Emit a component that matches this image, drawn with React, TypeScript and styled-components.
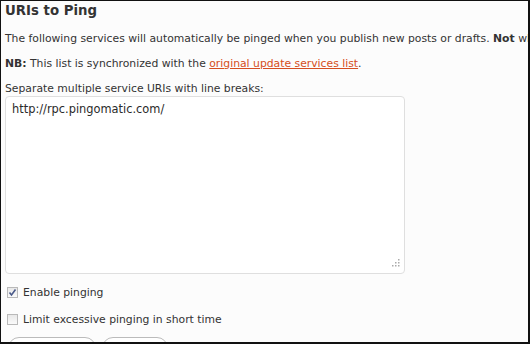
import React from "react";
import styled, { createGlobalStyle } from "styled-components";

const Global = createGlobalStyle`
  html, body { margin: 0; padding: 0; background: #fcfcfc; }
  body { width: 530px; height: 344px; overflow: hidden; }
`;

const Frame = styled.div`
  box-sizing: border-box;
  width: 530px;
  height: 344px;
  border-top: 1px solid #111;
  border-left: 1px solid #111;
  border-right: 2px solid #111;
  border-bottom: 2px solid #111;
  background: #fcfcfc;
  overflow: hidden;
  padding: 1px 0 0 4px;
  font-family: "DejaVu Sans", Verdana, sans-serif;
  color: #333;
  font-size: 10.8px;
`;

const Heading = styled.h3`
  margin: 0;
  font-size: 13.3px;
  font-weight: bold;
  line-height: 18px;
  color: #333;
`;

const Para = styled.p<{ $mt: number }>`
  margin: ${(p) => p.$mt}px 0 0 0;
  line-height: 14px;
  height: 14px;
  white-space: nowrap;
`;

const Link = styled.a`
  color: #d54e21;
  text-decoration: underline;
`;

const TextArea = styled.div`
  box-sizing: border-box;
  position: relative;
  margin-top: 0;
  width: 400px;
  height: 178px;
  border: 1px solid #dfdfdf;
  border-radius: 4px;
  background: #fff;
  padding: 5px 6px;
  font-size: 11.4px;
  line-height: 15px;
  color: #2a2a2a;
`;

const Grip = styled.svg`
  position: absolute;
  right: 4px;
  bottom: 4px;
`;

const CheckRow = styled.label<{ $mt: number }>`
  display: flex;
  align-items: center;
  gap: 5px;
  margin: ${(p) => p.$mt}px 0 0 2px;
  height: 14px;
  white-space: nowrap;
`;

const Box = styled.span`
  box-sizing: border-box;
  width: 11px;
  height: 11px;
  border: 1px solid #b9b9b9;
  background: linear-gradient(#e8e8e8, #fafafa);
  display: flex;
  align-items: center;
  justify-content: center;
`;

const Buttons = styled.div`
  display: flex;
  gap: 6px;
  margin: 11px 0 0 3px;
`;

const Button = styled.div<{ $w: number }>`
  box-sizing: border-box;
  width: ${(p) => p.$w}px;
  height: 22px;
  border: 1px solid #bbb;
  border-radius: 11px;
  background: #fff;
`;

export default function App() {
  return (
    <>
      <Global />
      <Frame>
        <Heading>URIs to Ping</Heading>
        <Para $mt={12}>
          The following services will automatically be pinged when you publish new posts or drafts. <b>Not</b> when you edit previously published posts, as this would be really spammy.
        </Para>
        <Para $mt={11}>
          <b>NB:</b> This list is synchronized with the <Link href="#">original update services list</Link>.
        </Para>
        <Para $mt={11}>Separate multiple service URIs with line breaks:</Para>
        <TextArea>
          http://rpc.pingomatic.com/
          <Grip width="10" height="10" viewBox="0 0 10 10">
            <g fill="#aaa">
              <rect x="8" y="0" width="1.5" height="1.5" />
              <rect x="5" y="3" width="1.5" height="1.5" />
              <rect x="8" y="3" width="1.5" height="1.5" />
              <rect x="2" y="6" width="1.5" height="1.5" />
              <rect x="5" y="6" width="1.5" height="1.5" />
              <rect x="8" y="6" width="1.5" height="1.5" />
            </g>
          </Grip>
        </TextArea>
        <CheckRow $mt={11}>
          <Box>
            <svg width="9" height="9" viewBox="0 0 9 9">
              <path d="M1.5 4.5 L3.5 7 L7.5 1.5" stroke="#4a5a8a" strokeWidth="1.6" fill="none" />
            </svg>
          </Box>
          Enable pinging
        </CheckRow>
        <CheckRow $mt={13}>
          <Box />
          Limit excessive pinging in short time
        </CheckRow>
        <Buttons>
          <Button $w={88} />
          <Button $w={66} />
        </Buttons>
      </Frame>
    </>
  );
}
